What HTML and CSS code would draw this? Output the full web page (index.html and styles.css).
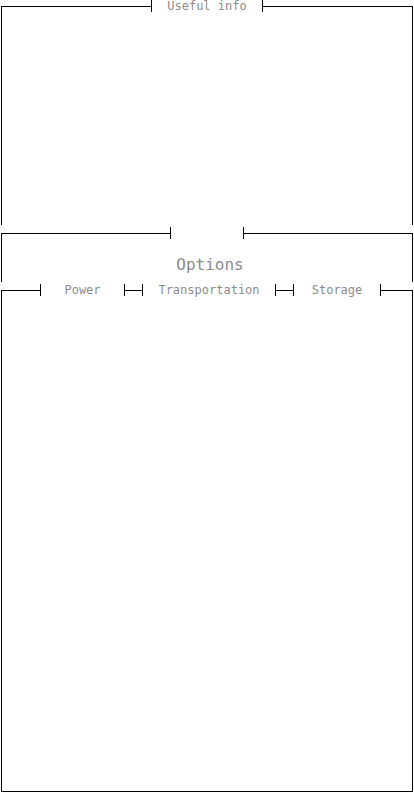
FILE: index.html
```html
<!DOCTYPE html>
<html lang="en">
<head>
    <meta charset="UTF-8">
    <meta name="viewport" content="width=device-width, initial-scale=1.0">
    <title>Useful info</title>
    <link rel="stylesheet" href="styles.css">
</head>
<body>
    <fieldset class="panel info">
        <legend class="tick">Useful info</legend>
        <div class="info-body"></div>
    </fieldset>

    <fieldset class="panel options">
        <legend class="tick blank"></legend>
        <div class="options-body">Options</div>
    </fieldset>

    <fieldset class="panel tabs">
        <legend class="tab-row">
            <span class="tick tab power">Power</span>
            <span class="link"></span>
            <span class="tick tab transport">Transportation</span>
            <span class="link"></span>
            <span class="tick tab storage">Storage</span>
        </legend>
        <div class="tab-body"></div>
    </fieldset>
</body>
</html>
```

FILE: styles.css
```css
html, body {
    margin: 0;
    padding: 0;
    background: #fff;
}
body {
    font-family: "DejaVu Sans Mono", "Liberation Mono", monospace;
    color: #8c8c8c;
    height: 100vh;
    display: flex;
    flex-direction: column;
}

/* boxes drawn like a terminal frame */
.panel {
    margin: 0 1px;
    padding: 0;
    border: 1px solid #000;
    min-width: 0;
}
.info,
.options {
    border-bottom: none;
}
.options,
.tabs {
    margin-top: 2px;
}
.tabs {
    flex: 1;
    display: flex;
    flex-direction: column;
}

/* ┤ text ├ */
.tick {
    box-sizing: border-box;
    height: 12px;
    line-height: 13px;
    font-size: 12px;
    border-left: 1px solid #000;
    border-right: 1px solid #000;
    text-align: center;
    white-space: nowrap;
}
legend.tick {
    margin: 0 auto;
    padding: 0;
    width: 112px;
}
legend.blank {
    width: 74px;
}

.info-body {
    height: 213px;
}
.options-body {
    height: 43px;
    box-sizing: border-box;
    padding: 16px 0 0 6px;
    line-height: 20px;
    font-size: 16px;
    text-align: center;
}

.tab-row {
    margin: 0 0 0 38px;
    padding: 0;
    display: flex;
    height: 12px;
}
.tab {
    display: block;
}
.power { width: 85px; }
.transport { width: 134px; }
.storage { width: 88px; }
.link {
    width: 17px;
    height: 1px;
    align-self: center;
    background: #000;
}
.tab-body {
    flex: 1;
}
```
